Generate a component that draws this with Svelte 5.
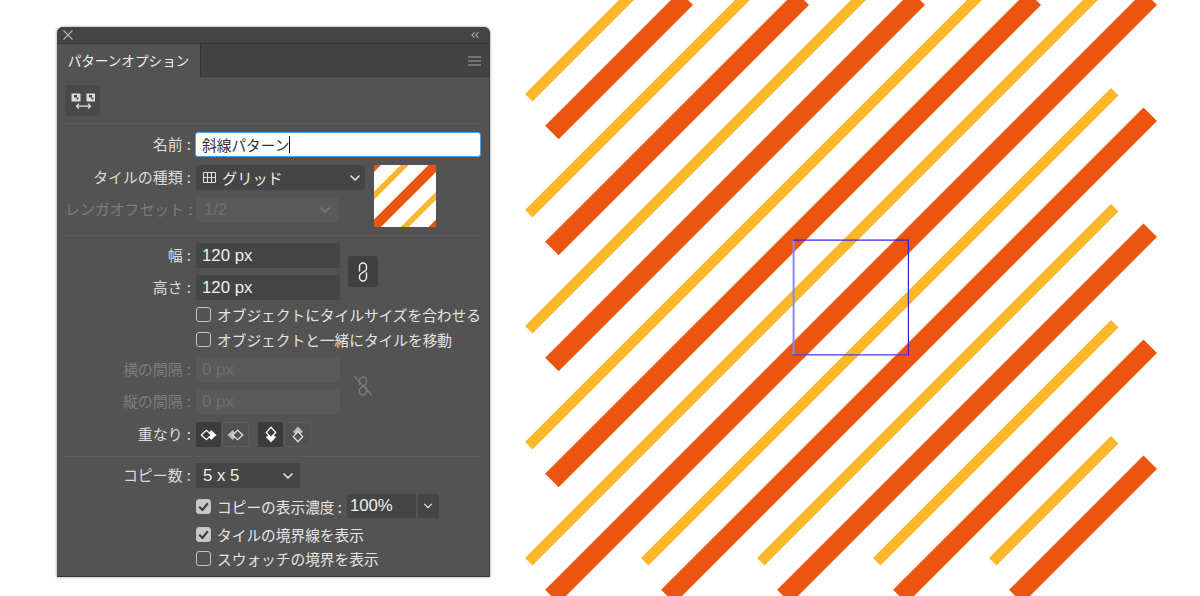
<script>
  const pt = (sum, diff) => `${(sum + diff) / 2},${(sum - diff) / 2}`;
  const quad = (s1, s2, d1, d2) =>
    [pt(s1, d1), pt(s2, d1), pt(s2, d2), pt(s1, d2)].join(' ');

  const ks = [0, 1, 2, 3, 4, 5, 6, 7, 8];
  const yellow = ks.map((k) =>
    quad(
      619 + 116 * k,
      634 + 116 * k,
      k <= 4 ? 431 - 116 * k : 83 + 116 * (k - 5),
      k <= 4 ? 675 + 116 * k : 1023 - 116 * (k - 5)
    )
  );
  const orange = ks.map((k) =>
    quad(
      671 + 116 * k,
      698 + 116 * k,
      k <= 4 ? 419.3 - 116 * k : 71.3 + 116 * (k - 5),
      k <= 4 ? 688 + 116 * k : 1036 - 116 * (k - 5)
    )
  );
</script>

{#snippet stripes()}
  {#each yellow as p}<polygon points={p} fill="#fbb72c" />{/each}
  {#each orange as p}<polygon points={p} fill="#ec5510" />{/each}
{/snippet}

{#snippet chevron(cls = '')}
  <svg class="chev {cls}" viewBox="0 0 12 8" width="12" height="8" aria-hidden="true">
    <path d="M1.5 1.5 L6 6 L10.5 1.5" fill="none" stroke="currentColor" stroke-width="1.5" />
  </svg>
{/snippet}

{#snippet link()}
  <path d="M1.5 9.5 V4.5 a3.5 3.5 0 0 1 7 0 V6.5 a3 3 0 0 1 -1 2.2 L2.5 12 a3 3 0 0 0 -1 2.2 V15.5 a3.5 3.5 0 0 0 7 0 V10.5" fill="none" stroke="currentColor" stroke-width="1.4" />
{/snippet}

<div class="page">
  <section class="panel">
    <header class="titlebar">
      <svg viewBox="0 0 10 10" width="10" height="10" class="close" aria-hidden="true">
        <path d="M.5 .5 L9.5 9.5 M9.5 .5 L.5 9.5" stroke="#b4b4b4" stroke-width="1.1" />
      </svg>
      <svg viewBox="0 0 9 7" width="8" height="6" aria-hidden="true">
        <path d="M4 .5 L1 3.5 L4 6.5 M8.5 .5 L5.5 3.5 L8.5 6.5" fill="none" stroke="#b4b4b4" stroke-width="1.2" />
      </svg>
    </header>

    <div class="tabstrip">
      <div class="tab">パターンオプション</div>
      <svg viewBox="0 0 13 10" width="13" height="10" class="menu" aria-hidden="true">
        <path d="M0 1 H13 M0 5 H13 M0 9 H13" stroke="#a8a8a8" stroke-width="1.2" />
      </svg>
    </div>

    <div class="toolbar">
      <div class="tool">
        <svg viewBox="0 0 24 20" width="24" height="20" aria-hidden="true">
          <rect x=".5" y="2.5" width="9" height="8" fill="#dcdcdc" />
          <rect x="15.5" y="2.5" width="8.5" height="8" fill="#dcdcdc" />
          <rect x="3" y="4" width="3" height="2.5" fill="#4a4a4a" />
          <rect x="5.5" y="6.5" width="2" height="2" fill="#4a4a4a" />
          <rect x="18" y="4" width="3" height="2.5" fill="#4a4a4a" />
          <rect x="20.5" y="6.5" width="2" height="2" fill="#4a4a4a" />
          <path d="M5.5 15.2 H19.5 M8 12.7 L5.5 15.2 L8 17.7 M17 12.7 L19.5 15.2 L17 17.7" fill="none" stroke="#e4e4e4" stroke-width="1.2" />
        </svg>
      </div>
    </div>

    <div class="sec sec1">
      <div class="row">
        <span class="label">名前 :</span>
        <div class="name">斜線パターン<i class="caret"></i></div>
      </div>
      <div class="split">
        <div class="stack">
          <div class="row">
            <span class="label">タイルの種類 :</span>
            <div class="field select tiletype">
              <svg viewBox="0 0 13 13" width="13" height="13" class="grid-ico" aria-hidden="true">
                <path d="M.5 1.5 H12.5 V11.5 H.5 Z M4.5 1.5 V11.5 M8.5 1.5 V11.5 M.5 6.5 H12.5" fill="none" stroke="#dcdcdc" />
              </svg>
              <span class="val ja">グリッド</span>
              {@render chevron()}
            </div>
          </div>
          <div class="row offset">
            <span class="label off">レンガオフセット :</span>
            <div class="field select disabled brick">
              <span class="val">1/2</span>
              {@render chevron()}
            </div>
          </div>
        </div>
        <svg class="swatch" viewBox="793 240 116 116" aria-hidden="true">
          <rect x="793" y="240" width="116" height="116" fill="#fff" />
          {@render stripes()}
        </svg>
      </div>
    </div>

    <div class="sec sec2">
      <div class="split pair">
        <div class="stack s7">
          <div class="row">
            <span class="label">幅 :</span>
            <div class="field num"><span class="val">120 px</span></div>
          </div>
          <div class="row">
            <span class="label">高さ :</span>
            <div class="field num"><span class="val">120 px</span></div>
          </div>
        </div>
        <div class="linkbtn">
          <svg viewBox="0 0 10 20" width="10" height="20" aria-hidden="true">{@render link()}</svg>
        </div>
      </div>
      <div class="checks c1">
        <div class="check"><span class="box"></span>オブジェクトにタイルサイズを合わせる</div>
        <div class="check"><span class="box"></span>オブジェクトと一緒にタイルを移動</div>
      </div>
      <div class="split pair spacing">
        <div class="stack s7">
          <div class="row">
            <span class="label off">横の間隔 :</span>
            <div class="field num disabled"><span class="val">0 px</span></div>
          </div>
          <div class="row">
            <span class="label off">縦の間隔 :</span>
            <div class="field num disabled"><span class="val">0 px</span></div>
          </div>
        </div>
        <svg class="unlink" viewBox="-4 0 18 20" width="18" height="20" aria-hidden="true">
          {@render link()}
          <path d="M-4 0 L14 19.5" stroke="currentColor" stroke-width="1.2" />
        </svg>
      </div>
      <div class="row overlap">
        <span class="label">重なり :</span>
        <div class="ovgroup">
          <div class="ov on">
            <svg viewBox="0 0 20 14" width="17" height="12" aria-hidden="true">
              <path d="M13 1 L19.5 7 L13 13 L9 7 Z" fill="#fff" />
              <path d="M7.5 1.5 L13.5 7 L7.5 12.5 L1.5 7 Z" fill="#3c3c3c" stroke="#fff" stroke-width="1.5" />
            </svg>
          </div>
          <div class="ov">
            <svg viewBox="0 0 20 14" width="17" height="12" aria-hidden="true">
              <path d="M7 1 L.5 7 L7 13 L11 7 Z" fill="#bdbdbd" />
              <path d="M12.5 1.5 L18.5 7 L12.5 12.5 L6.5 7 Z" fill="#535353" stroke="#e0e0e0" stroke-width="1.5" />
            </svg>
          </div>
        </div>
        <div class="ovgroup">
          <div class="ov on">
            <svg viewBox="0 0 14 20" width="12" height="17" aria-hidden="true">
              <path d="M1 13 L7 19.5 L13 13 L7 9 Z" fill="#fff" />
              <path d="M7 1.5 L12.5 7.5 L7 13.5 L1.5 7.5 Z" fill="#3c3c3c" stroke="#fff" stroke-width="1.5" />
            </svg>
          </div>
          <div class="ov">
            <svg viewBox="0 0 14 20" width="12" height="17" aria-hidden="true">
              <path d="M1 7 L7 .5 L13 7 L7 11 Z" fill="#bdbdbd" />
              <path d="M7 6.5 L12.5 12.5 L7 18.5 L1.5 12.5 Z" fill="#535353" stroke="#e0e0e0" stroke-width="1.5" />
            </svg>
          </div>
        </div>
      </div>
    </div>

    <div class="sec sec3">
      <div class="row">
        <span class="label">コピー数 :</span>
        <div class="field select copies"><span class="val">5 x 5</span>{@render chevron()}</div>
      </div>
      <div class="check opac">
        <span class="box on">
          <svg viewBox="0 0 14 14" width="15" height="15" aria-hidden="true"><path d="M3 7.2 L6 10.2 L11 4" fill="none" stroke="#3c3c3c" stroke-width="2" /></svg>
        </span>
        コピーの表示濃度 :
        <div class="field pct"><span class="val">100%</span></div>
        <div class="field drop">{@render chevron()}</div>
      </div>
      <div class="check t2">
        <span class="box on">
          <svg viewBox="0 0 14 14" width="15" height="15" aria-hidden="true"><path d="M3 7.2 L6 10.2 L11 4" fill="none" stroke="#3c3c3c" stroke-width="2" /></svg>
        </span>
        タイルの境界線を表示
      </div>
      <div class="check t3"><span class="box"></span>スウォッチの境界を表示</div>
    </div>
  </section>

  <svg class="art" viewBox="500 0 700 596" aria-label="斜線パターン">
    {@render stripes()}
    <rect x="792.6" y="240" width="2" height="115" fill="#8a86fb" />
    <rect x="793" y="354.2" width="116" height="1.3" fill="#4a42f0" />
    <rect x="793" y="239.5" width="116" height="1.2" fill="#2a1fe4" />
    <rect x="907.8" y="240" width="1.2" height="115" fill="#2a1fe4" />
  </svg>
</div>

<style>
  :global(body) {
    margin: 0;
    background: #fff;
  }
  .page {
    display: flex;
    align-items: flex-start;
    width: 1200px;
    height: 596px;
    overflow: hidden;
    box-sizing: border-box;
    padding-left: 57px;
    font-family: "Liberation Sans", "Noto Sans CJK JP", sans-serif;
  }
  .art {
    width: 700px;
    height: 596px;
    margin-left: 10px;
    flex: none;
    display: block;
  }
  .panel {
    width: 433px;
    height: 550px;
    margin-top: 27px;
    flex: none;
    background: #535353;
    border-radius: 6px 6px 0 0;
    border-right: 1px solid #3d3d3d;
    border-bottom: 1px solid #333;
    box-sizing: border-box;
    box-shadow: 0 0 3px rgba(0, 0, 0, 0.45);
    color: #e4e4e4;
    font-size: 14.7px;
    font-family: "Noto Sans CJK JP", sans-serif;
    position: relative;
  }
  .titlebar {
    height: 16px;
    background: #434443;
    border-bottom: 1px solid #363736;
    border-radius: 6px 6px 0 0;
    display: flex;
    align-items: center;
    justify-content: space-between;
    padding: 0 10px 0 6px;
  }
  .tabstrip {
    background: #424342;
    border-bottom: 1px solid #393a39;
    display: flex;
    align-items: flex-start;
    justify-content: space-between;
    padding-right: 8px;
    height: 32px;
  }
  .tab {
    width: 144px;
    height: 33px;
    background: #535353;
    border-right: 1px solid #363736;
    box-sizing: border-box;
    text-align: center;
    line-height: 32px;
    color: #f0f0f0;
    font-size: 13.6px;
    white-space: nowrap;
  }
  .menu {
    margin-top: 12px;
  }
  .toolbar {
    padding: 8px 8px 7px;
    height: 31px;
  }
  .tool {
    width: 35px;
    height: 31px;
    background: #484948;
    border-radius: 2px;
    display: flex;
    align-items: center;
    justify-content: center;
  }
  .sec {
    margin: 0 9px 0 8px;
    border-top: 1px dotted #646464;
  }
  .sec1 {
    padding-top: 8px;
    height: 103px;
  }
  .sec2 {
    padding-top: 7px;
    height: 213px;
  }
  .sec3 {
    padding-top: 6px;
  }
  .row {
    display: flex;
    align-items: center;
    height: 25px;
  }
  .label {
    width: 126px;
    margin-right: 5px;
    flex: none;
    text-align: right;
    white-space: nowrap;
    color: #dcdcdc;
    line-height: 1;
    font-size: 14.9px;
    word-spacing: 1px;
  }
  .label.off {
    color: #7d7d7d;
  }
  .name {
    width: 286px;
    flex: none;
    height: 25px;
    box-sizing: border-box;
    margin-left: -1px;
    background: #fff;
    border: 1.5px solid #4f9fe8;
    border-radius: 3px;
    color: #333;
    padding-left: 6px;
    line-height: 22px;
    display: flex;
    align-items: center;
  }
  .caret {
    width: 1px;
    height: 17px;
    background: #111;
  }
  .split {
    display: flex;
    align-items: flex-start;
  }
  .sec1 .split {
    margin-top: 8px;
  }
  .stack {
    display: flex;
    flex-direction: column;
  }
  .offset {
    margin-top: 7px;
  }
  .field {
    background: #444544;
    border-radius: 3px;
    height: 25px;
    box-sizing: border-box;
    display: flex;
    align-items: center;
    justify-content: space-between;
    color: #efefef;
  }
  .field.disabled {
    background: #5a5a5a;
    color: #6f6f6f;
  }
  .val {
    font-family: "Liberation Sans", sans-serif;
    font-size: 16.8px;
    white-space: nowrap;
  }
  .val.ja {
    font-family: "Noto Sans CJK JP", sans-serif;
    font-size: 15.2px;
    flex: 1;
    margin: -2px 0 0 6px;
  }
  .tiletype {
    width: 169px;
    padding: 0 4px 0 7px;
  }
  .brick {
    width: 142px;
    padding: 0 7px 0 8px;
  }
  .grid-ico {
    flex: none;
  }
  .chev {
    flex: none;
    color: #ececec;
  }
  .disabled .chev {
    color: #7a7a7a;
  }
  .swatch {
    width: 62px;
    height: 62px;
    margin-left: 9px;
    flex: none;
    display: block;
  }
  .sec2 .pair {
    align-items: center;
  }
  .s7 {
    gap: 7px;
  }
  .num {
    width: 144px;
    padding-left: 6px;
  }
  .linkbtn {
    width: 30px;
    height: 31px;
    margin-left: 8px;
    background: #3f403f;
    border-radius: 3px;
    color: #eee;
    display: flex;
    align-items: center;
    justify-content: center;
  }
  .unlink {
    margin-left: 14px;
    color: #7a7a7a;
  }
  .checks {
    margin-top: 2px;
  }
  .check {
    display: flex;
    align-items: center;
    margin-left: 131px;
    height: 25px;
    white-space: nowrap;
    color: #e4e4e4;
  }
  .box {
    width: 15px;
    height: 15px;
    box-sizing: border-box;
    border: 1px solid #c4c4c4;
    border-radius: 3px;
    margin-right: 6px;
    flex: none;
    display: block;
  }
  .box svg {
    display: block;
    margin: -1px;
  }
  .box.on {
    background: #c8c8c8;
  }
  .spacing {
    margin-top: 5px;
  }
  .overlap {
    margin-top: 8px;
  }
  .ovgroup {
    display: flex;
    margin-right: 9px;
    gap: 1px;
  }
  .ov {
    width: 25px;
    height: 25px;
    background: #515151;
    border: 1px solid #5b5b5b;
    border-radius: 2px;
    display: flex;
    align-items: center;
    justify-content: center;
    box-sizing: border-box;
  }
  .ov:last-child {
    width: 27px;
  }
  .ov.on {
    background: #3c3c3c;
    border-color: #3c3c3c;
  }
  .copies {
    width: 104px;
    padding: 0 6px 0 7px;
  }
  .opac {
    margin-top: 6px;
    height: 24px;
  }
  .pct {
    width: 69px;
    height: 24px;
    margin-left: 5px;
    padding-left: 3px;
    border-radius: 2px 0 0 2px;
  }
  .drop {
    width: 21px;
    height: 24px;
    margin-left: 2px;
    justify-content: center;
    border-radius: 0 2px 2px 0;
  }
  .drop .chev {
    width: 10px;
  }
  .t2 {
    margin-top: 4px;
  }
  .t3 {
    margin-top: -1px;
  }
</style>
